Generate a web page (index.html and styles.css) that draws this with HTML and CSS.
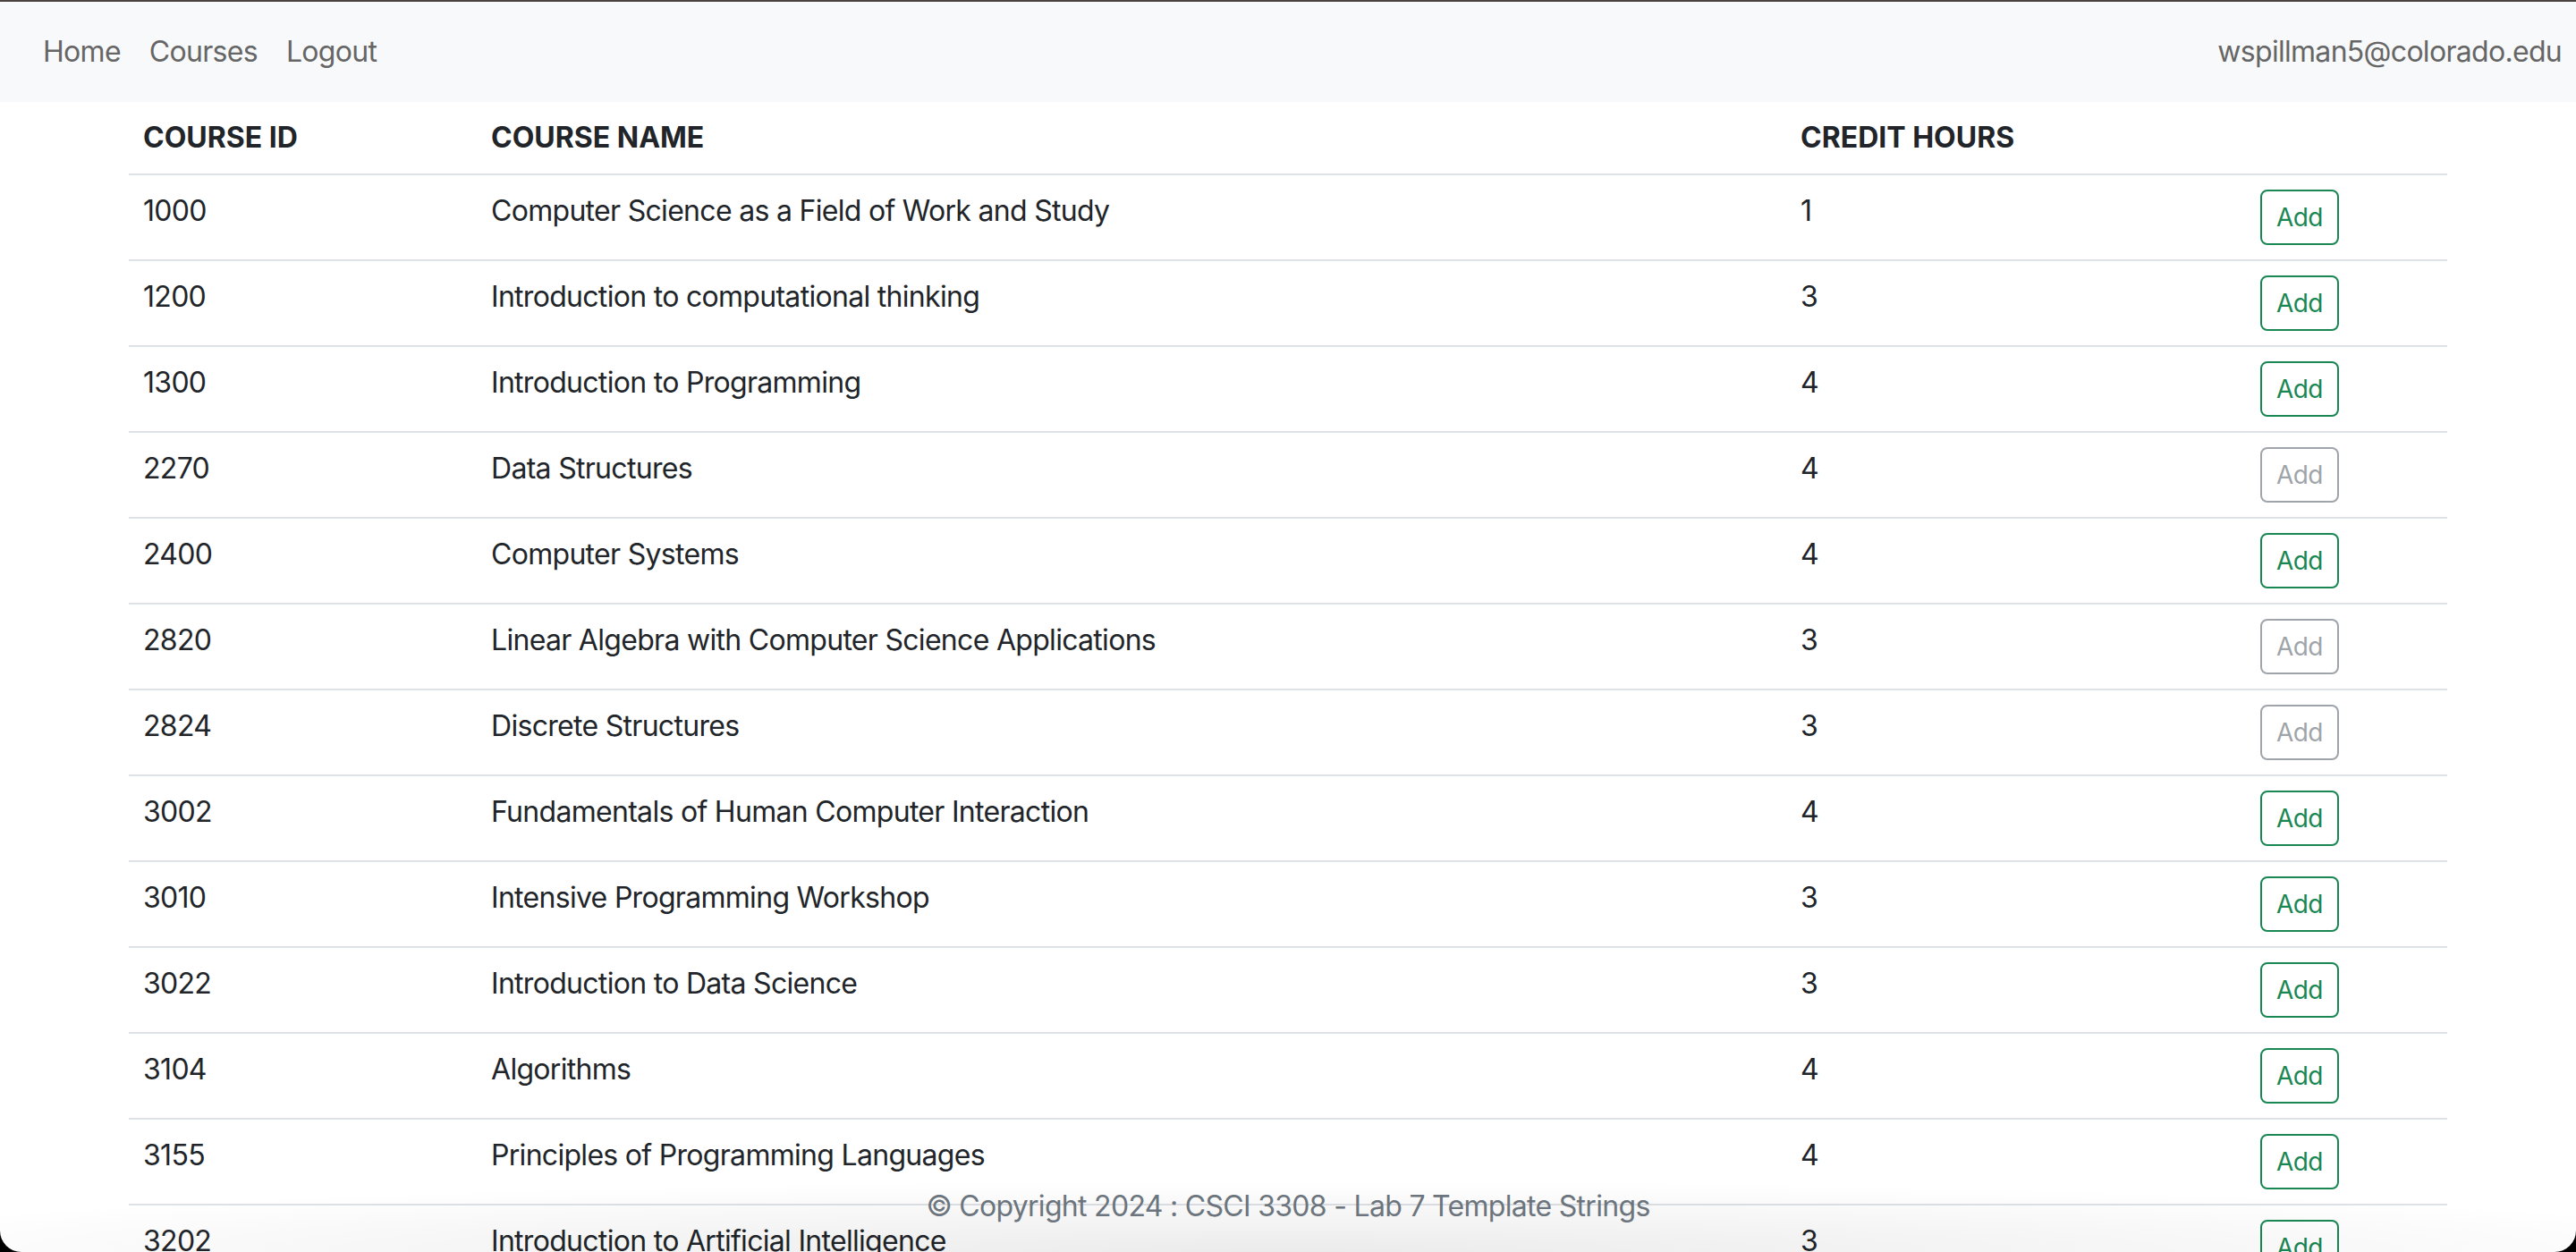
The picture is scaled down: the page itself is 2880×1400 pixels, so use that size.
FILE: index.html
```html
<!DOCTYPE html>
<html lang="en">
<head>
<meta charset="utf-8">
<title>Courses</title>
<link rel="stylesheet" href="styles.css">
</head>
<body>
<div class="window">
  <nav class="navbar">
    <ul class="nav">
      <li><a class="nav-link" href="#">Home</a></li>
      <li><a class="nav-link" href="#">Courses</a></li>
      <li><a class="nav-link" href="#">Logout</a></li>
    </ul>
    <span class="user">wspillman5@colorado.edu</span>
  </nav>
  <main class="container">
    <table class="table">
      <thead>
        <tr><th class="c-id">COURSE ID</th><th class="c-name">COURSE NAME</th><th class="c-hours">CREDIT HOURS</th><th class="c-act"></th></tr>
      </thead>
      <tbody>
        <tr><td>1000</td><td>Computer Science as a Field of Work and Study</td><td>1</td><td><button class="btn">Add</button></td></tr>
        <tr><td>1200</td><td>Introduction to computational thinking</td><td>3</td><td><button class="btn">Add</button></td></tr>
        <tr><td>1300</td><td>Introduction to Programming</td><td>4</td><td><button class="btn">Add</button></td></tr>
        <tr><td>2270</td><td>Data Structures</td><td>4</td><td><button class="btn btn-disabled" disabled>Add</button></td></tr>
        <tr><td>2400</td><td>Computer Systems</td><td>4</td><td><button class="btn">Add</button></td></tr>
        <tr><td>2820</td><td>Linear Algebra with Computer Science Applications</td><td>3</td><td><button class="btn btn-disabled" disabled>Add</button></td></tr>
        <tr><td>2824</td><td>Discrete Structures</td><td>3</td><td><button class="btn btn-disabled" disabled>Add</button></td></tr>
        <tr><td>3002</td><td>Fundamentals of Human Computer Interaction</td><td>4</td><td><button class="btn">Add</button></td></tr>
        <tr><td>3010</td><td>Intensive Programming Workshop</td><td>3</td><td><button class="btn">Add</button></td></tr>
        <tr><td>3022</td><td>Introduction to Data Science</td><td>3</td><td><button class="btn">Add</button></td></tr>
        <tr><td>3104</td><td>Algorithms</td><td>4</td><td><button class="btn">Add</button></td></tr>
        <tr><td>3155</td><td>Principles of Programming Languages</td><td>4</td><td><button class="btn">Add</button></td></tr>
        <tr><td>3202</td><td>Introduction to Artificial Intelligence</td><td>3</td><td><button class="btn">Add</button></td></tr>
      </tbody>
    </table>
  </main>
  <footer class="footer">© Copyright 2024 : CSCI 3308 - Lab 7 Template Strings</footer>
</div>
</body>
</html>
```

FILE: styles.css
```css
html, body {
  margin: 0;
  padding: 0;
  background: #000;
}
body {
  font-family: Inter, "Noto Sans", "Liberation Sans", sans-serif;
  color: #212529;
  letter-spacing: -0.7px;
}
.window {
  position: relative;
  width: 2880px;
  height: 1400px;
  box-sizing: border-box;
  background: #fff;
  border-top: 2px solid #4a4341;
  border-radius: 0 0 24px 24px;
  overflow: hidden;
}
.navbar {
  height: 112px;
  background: #f8f9fa;
  display: flex;
  align-items: center;
  justify-content: space-between;
  padding: 0 16px 0 32px;
  box-sizing: border-box;
}
.nav {
  list-style: none;
  margin: 0;
  padding: 0;
  display: flex;
}
.nav-link {
  display: block;
  padding: 16px;
  font-size: 32px;
  line-height: 48px;
  color: #666;
  text-decoration: none;
}
.user {
  font-size: 32px;
  line-height: 48px;
  color: #666;
}
.container {
  width: 2640px;
  margin: 0 auto;
  padding: 0 24px;
  box-sizing: border-box;
}
.table {
  width: 100%;
  border-collapse: collapse;
  font-size: 32px;
  line-height: 48px;
  vertical-align: top;
}
.table th, .table td {
  padding: 16px;
  text-align: left;
  border-bottom: 2px solid #dee2e6;
  vertical-align: top;
}
.table th {
  font-weight: 700;
  letter-spacing: 0;
}
.c-id { width: 357px; }
.c-name { width: 1432px; }
.c-hours { width: 482px; }
.c-act { width: 193px; }
.btn {
  font-family: inherit;
  font-size: 28px;
  line-height: 42px;
  letter-spacing: -0.6px;
  padding: 8px 16px;
  border: 2px solid #198754;
  border-radius: 8px;
  background: transparent;
  color: #198754;
  display: block;
}
.btn-disabled {
  border-color: #6c757d;
  color: #6c757d;
  opacity: 0.65;
}
.footer {
  position: absolute;
  left: 0;
  right: 0;
  bottom: 0;
  height: 80px;
  padding-top: 5px;
  box-sizing: border-box;
  text-align: center;
  font-size: 32px;
  line-height: 48px;
  color: #6c757d;
  background: radial-gradient(ellipse 60% 100% at 50% 100%, rgba(0,0,0,0.08), rgba(0,0,0,0) 100%);
}
```
